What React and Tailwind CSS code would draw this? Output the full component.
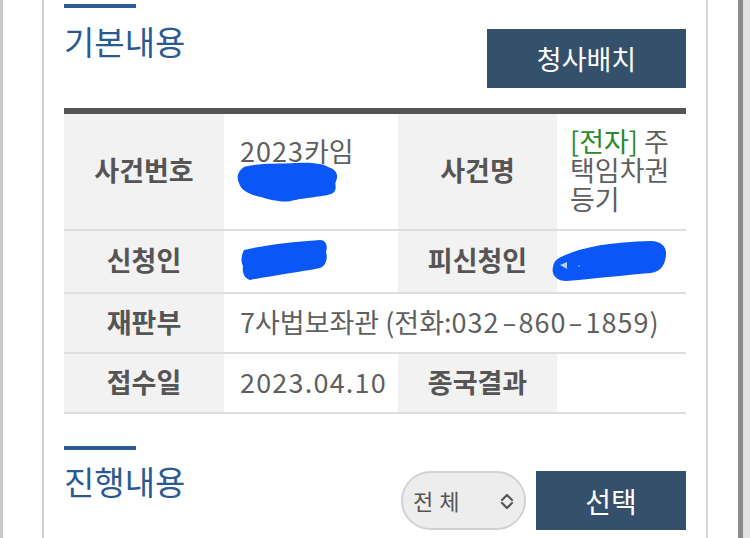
export default function App() {
  const label = "bg-[#f2f2f2] flex items-center justify-center pb-[4px] font-bold text-[#555] text-[27px] leading-[29px]";
  const value = "flex items-center pb-[4px] text-[#5f5f5f] text-[27px] leading-[29px]";
  const dash = "inline-block w-[19px] text-center scale-x-[1.6]";
  return (
    <div className="w-[750px] h-[538px] overflow-hidden bg-white flex font-['Noto_Sans_CJK_KR',sans-serif]">
      <div className="w-[3px] shrink-0 bg-[#c9c9c9]" />
      <div className="w-[39px] shrink-0" />
      <div className="w-[2px] shrink-0 bg-[#d0d0d0]" />
      <div className="w-[20px] shrink-0" />
      <div className="w-[622px] shrink-0 flex flex-col">
        <div className="h-[4px]" />
        <div className="w-[72px] h-[4px] bg-[#2c5c98]" />
        <div className="flex justify-between items-start">
          <h2 className="mt-[13px] text-[33px] leading-[40px] text-[#2b5a92]">기본내용</h2>
          <button className="mt-[21px] w-[199px] h-[59px] bg-[#35506a] text-white text-[27px] leading-[32px]">청사배치</button>
        </div>
        <div className="mt-[20px] border-t-[6px] border-[#555]">
          <div className="grid grid-cols-[160px_174px_159px_129px] h-[117px] border-b-2 border-[#dedede]">
            <div className={label}>사건번호</div>
            <div className={value + " pl-[16px]"}>
              <div className="flex flex-col">
                <span><span className="tracking-[1px]">2023</span>카임</span>
                <svg width="104" height="42" viewBox="0 0 104 42" className="-ml-[4px] mt-[-4px]">
                  <path d="M8 6 C20 2, 40 3, 60 2 C75 1, 88 3, 92 6 C100 8, 103 14, 100 20 C98 24, 102 28, 97 32 C90 36, 70 36, 55 40 C45 42, 32 38, 25 36 C15 34, 5 30, 3 22 C0 16, 2 10, 8 6 Z" fill="#0a56f7" />
                </svg>
              </div>
            </div>
            <div className={label}>사건명</div>
            <div className={value + " pl-[13px]"}>
              <span><span className="text-[#2a8a2a]">[전자]</span> 주택임차권등기</span>
            </div>
          </div>
          <div className="grid grid-cols-[160px_174px_159px_129px] h-[63px] border-b-2 border-[#dedede]">
            <div className={label}>신청인</div>
            <div className={value + " pl-[16px]"}>
              <svg width="88" height="44" viewBox="0 0 88 44">
                <path d="M4 12 C20 8, 50 4, 80 2 C86 2, 88 8, 86 14 C88 20, 86 28, 80 30 C60 34, 30 38, 10 42 C4 40, 2 34, 3 28 C0 22, 2 16, 4 12 Z" fill="#0a56f7" />
              </svg>
            </div>
            <div className={label}>피신청인</div>
            <div className="flex items-center">
              <svg width="117" height="45" viewBox="0 0 117 45" className="-ml-[6px]">
                <path d="M10 18 C30 8, 60 3, 100 2 C110 2, 116 8, 115 16 C114 24, 112 32, 100 34 C75 36, 40 40, 15 42 C6 42, 0 36, 2 28 C3 22, 6 20, 10 18 Z" fill="#0a56f7" />
                <path d="M9 26 L16 23 L16 30 Z" fill="#bcd0ff" />
                <circle cx="28" cy="27" r="0.8" fill="#bcd0ff" />
              </svg>
            </div>
          </div>
          <div className="grid grid-cols-[160px_462px] h-[60px] border-b-2 border-[#dedede]">
            <div className={label}>재판부</div>
            <div className={value + " pl-[16px] whitespace-nowrap"}>
              <span>7사법보좌관 (전화:<span className="tracking-[1px]">032</span><span className={dash}>-</span><span className="tracking-[1px]">860</span><span className={dash}>-</span><span className="tracking-[1px]">1859</span>)</span>
            </div>
          </div>
          <div className="grid grid-cols-[160px_174px_159px_129px] h-[60px] border-b-2 border-[#dedede]">
            <div className={label}>접수일</div>
            <div className={value + " pl-[16px]"}><span className="tracking-[1.2px]">2023.04.10</span></div>
            <div className={label}>종국결과</div>
            <div />
          </div>
        </div>
        <div className="mt-[32px] w-[72px] h-[4px] bg-[#2c5c98]" />
        <div className="flex justify-between items-start">
          <h2 className="mt-[11px] text-[33px] leading-[40px] text-[#2b5a92]">진행내용</h2>
          <div className="mt-[21px] flex gap-[10px]">
            <div className="w-[125px] h-[59px] rounded-full bg-[#ededed] border-2 border-[#d2d2d2] flex items-center justify-between pl-[10px] pr-[9px]">
              <span className="text-[22px] text-[#555] tracking-[6px]">전체</span>
              <svg width="16" height="18" viewBox="0 0 16 18" fill="none" stroke="#555" strokeWidth="2.2" strokeLinecap="round" strokeLinejoin="round">
                <path d="M3 8 L8 3 L13 8" />
                <path d="M3 11 L8 16 L13 11" />
              </svg>
            </div>
            <button className="w-[150px] h-[59px] bg-[#35506a] text-white text-[28px] leading-[32px]">선택</button>
          </div>
        </div>
      </div>
      <div className="w-[20px] shrink-0" />
      <div className="w-[2px] shrink-0 bg-[#d6d6d6]" />
      <div className="w-[30px] shrink-0" />
      <div className="w-[5px] shrink-0 bg-[#8a8a8a]" />
      <div className="flex-1 bg-[#e2e2e2]" />
    </div>
  );
}
